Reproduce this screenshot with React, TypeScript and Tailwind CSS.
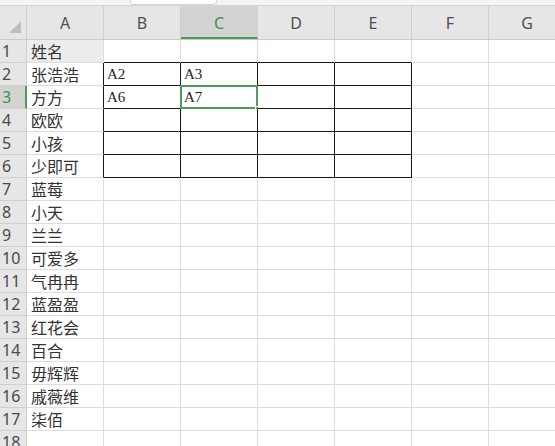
import React from "react";

const cols = ["A", "B", "C", "D", "E", "F", "G"];

const names = [
  "姓名",
  "张浩浩",
  "方方",
  "欧欧",
  "小孩",
  "少即可",
  "蓝莓",
  "小天",
  "兰兰",
  "可爱多",
  "气冉冉",
  "蓝盈盈",
  "红花会",
  "百合",
  "毋辉辉",
  "戚薇维",
  "柒佰",
  "",
];

const values: Record<string, string> = {
  B2: "A2",
  C2: "A3",
  B3: "A6",
  C3: "A7",
};

const inTable = (r: number, c: number) => r >= 2 && r <= 6 && c >= 1 && c <= 4;

function Cell({ r, c }: { r: number; c: number }) {
  const key = cols[c] + r;
  let cls =
    "relative flex h-[23px] w-[77px] shrink-0 items-end border-r border-b border-[#dddddd] pb-[1px]";
  if (c === 0) cls += " pl-[4px]";
  cls += r === 1 && c === 0 ? " bg-[#ececec]" : " bg-white";
  if (inTable(r, c)) cls += " border-r-[#1a1a1a] border-b-[#1a1a1a] pl-[3px]";
  if (c === 0 && r >= 2 && r <= 6) cls += " border-r-[#1a1a1a]";
  if (r === 1 && c >= 1 && c <= 4) cls += " border-b-[#1a1a1a]";
  const selected = key === "C3";

  return (
    <div className={cls}>
      {c === 0 ? (
        <span className="text-[16px] leading-[20px] text-[#333333] [font-family:'Noto_Sans_CJK_SC',sans-serif]">
          {names[r - 1]}
        </span>
      ) : (
        <span className="text-[15px] leading-[19px] text-[#1f1f1f] [font-family:'Liberation_Serif',serif]">
          {values[key] ?? ""}
        </span>
      )}
      {selected && (
        <>
          <div className="pointer-events-none absolute left-[-1px] top-[-1px] h-[24px] w-[78px] border-2 border-[#4e9c5c]" />
          <div className="absolute bottom-[-3px] right-[-3px] h-[5px] w-[5px] border border-white bg-[#4e9c5c]" />
        </>
      )}
    </div>
  );
}

export default function App() {
  const rows = Array.from({ length: 18 }, (_, i) => i + 1);
  return (
    <div className="h-[446px] w-[555px] overflow-hidden bg-white [font-family:'Noto_Sans',sans-serif]">
      <div className="flex h-[6px] border-b border-[#d6d6d6] bg-[#f4f4f4]">
        <div className="h-[6px] w-[130px]" />
        <div className="h-[5px] w-[87px] rounded-b-[4px] border-x border-b border-[#d6d6d6] bg-white" />
      </div>
      {/* column header */}
      <div className="flex h-[34px] border-b border-[#c9c9c9] bg-[#e6e6e6]">
        <div className="relative h-[33px] w-[27px] shrink-0 border-r border-[#cfcfcf]">
          <svg className="absolute left-[9px] top-[15px]" width="12" height="12" viewBox="0 0 12 12">
            <polygon points="12,0 12,12 0,12" fill="#bdbdbd" />
          </svg>
        </div>
        {cols.map((c) => (
          <div
            key={c}
            className={
              c === "C"
                ? "flex h-[33px] w-[77px] shrink-0 items-center justify-center border-r border-b-2 border-r-[#cfcfcf] border-b-[#4e9c5c] bg-[#d3d3d3] pt-[2px] text-[16px] text-[#3f8f4e]"
                : "flex h-[33px] w-[77px] shrink-0 items-center justify-center border-r border-[#cfcfcf] text-[16px] text-[#505050]"
            }
          >
            {c}
          </div>
        ))}
      </div>
      {rows.map((r) => (
        <div key={r} className="flex">
          <div
            className={
              r === 3
                ? "flex h-[23px] w-[27px] shrink-0 items-center border-r-2 border-b border-r-[#4e9c5c] border-b-[#cfcfcf] bg-[#d3d3d3] pl-[2px] text-[16px] text-[#3f8f4e]"
                : "flex h-[23px] w-[27px] shrink-0 items-center border-r border-b border-[#cfcfcf] bg-[#e6e6e6] pl-[2px] text-[16px] text-[#4a4a4a]"
            }
          >
            {r}
          </div>
          {cols.map((_, c) => (
            <Cell key={c} r={r} c={c} />
          ))}
        </div>
      ))}
    </div>
  );
}
